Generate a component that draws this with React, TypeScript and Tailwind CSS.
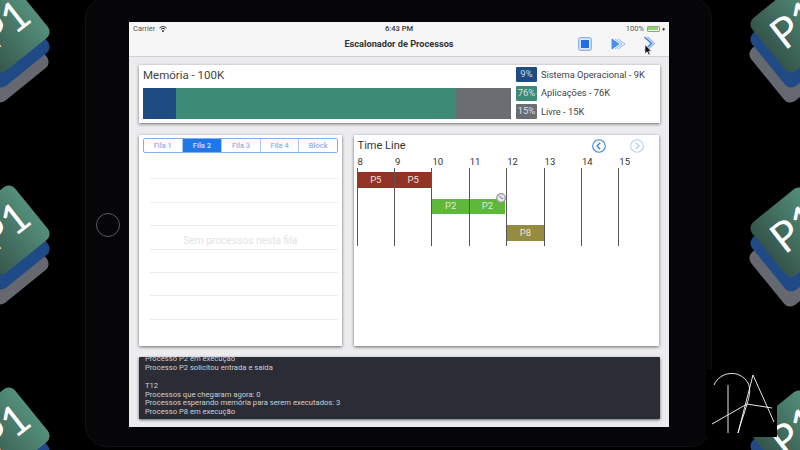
import { useId } from "react";

function Stack({ cx, cy }: { cx: number; cy: number }) {
  const id = useId();
  return (
    <svg className="absolute" style={{ left: cx - 70, top: cy - 70 }} width="140" height="160" viewBox="-70 -70 140 160">
      <defs>
        <linearGradient id={id} gradientUnits="userSpaceOnUse" x1="0" y1="-46" x2="0" y2="46">
          <stop offset="0" stopColor="#5a9a85" />
          <stop offset="1" stopColor="#2f4a42" />
        </linearGradient>
      </defs>
      <rect x="-34" y="-34" width="68" height="68" rx="8" fill="#666870" transform="translate(-1 30) rotate(51)" />
      <rect x="-34" y="-34" width="68" height="68" rx="8" fill="#1f4a86" transform="translate(0 15) rotate(51)" />
      <rect x="-34" y="-34" width="68" height="68" rx="8" fill={`url(#${id})`} transform="rotate(51)" />
      <text
        transform="translate(0 -4) rotate(-38) translate(0 15)"
        textAnchor="middle"
        fill="white"
        fontFamily="Lato, sans-serif"
        fontWeight="400"
        fontSize="42"
      >
        P1
      </text>
    </svg>
  );
}

function Swatch({ pct, label, color }: { pct: string; label: string; color: string }) {
  return (
    <div className="flex items-center gap-1 h-[15px]">
      <div className={`w-[21px] h-[15px] rounded-[1px] flex items-center justify-center text-[9.5px] text-[#d8dde0] ${color}`}>{pct}</div>
      <span className="text-[9.3px] whitespace-nowrap text-[#444]">{label}</span>
    </div>
  );
}

const tabs = ["Fila 1", "Fila 2", "Fila 3", "Fila 4", "Block"];
const tabWidths = ["w-[38px]", "w-[40px]", "w-[39px]", "w-[39px]", "w-[39px]"];
const hours = [8, 9, 10, 11, 12, 13, 14, 15];

function Bar({ label, className }: { label: string; className: string }) {
  return <div className={`z-10 flex items-center justify-center text-[9.5px] text-[#e8e4dc] ${className}`}>{label}</div>;
}

export default function App() {
  return (
    <div className="relative w-[800px] h-[450px] bg-black overflow-hidden font-['Roboto',sans-serif]">
      <div className="ml-[85px] -mt-[3px] w-[627px] h-[450px] rounded-[22px] bg-[#060508] border border-[#121114] pl-[43px] pt-[24px] flex">
        <div className="w-[540px] h-[405px] bg-[#ececee] flex flex-col">
          {/* status + nav */}
          <div className="h-[35px] bg-[#f6f6f7] border-b border-[#cfcfd2] flex flex-col">
            <div className="h-[13px] px-1 flex items-center justify-between text-[7.5px] text-[#555]">
              <div className="w-[90px] flex items-center gap-1">
                Carrier
                <svg width="8" height="6" viewBox="0 0 8 6" fill="none" stroke="#333" strokeWidth="1">
                  <path d="M.5 2a5 5 0 0 1 7 0M1.8 3.3a3.2 3.2 0 0 1 4.4 0" />
                  <circle cx="4" cy="5" r=".6" fill="#333" />
                </svg>
              </div>
              <span className="font-medium text-[#333]">6:43 PM</span>
              <div className="w-[90px] flex items-center justify-end gap-[2px]">
                100%
                <div className="w-[13px] h-[6px] border border-[#999] rounded-[1px] p-[0.5px] ml-[1px]">
                  <div className="w-full h-full bg-[#86d95e]" />
                </div>
                <span className="text-[6px] text-[#333]">♦</span>
              </div>
            </div>
            <div className="relative flex-1 flex items-center justify-center text-[9.2px] font-bold text-[#333] pb-[3px]">
              Escalonador de Processos
              <div className="absolute left-[449px] top-[1px] flex items-center">
                <svg width="14" height="14" viewBox="0 0 14 14">
                  <rect x=".7" y=".7" width="12.6" height="12.6" rx="1.5" fill="#dce9fb" stroke="#6ea4ee" strokeWidth="1" />
                  <rect x="3" y="3" width="8" height="8" fill="#1f6fe0" />
                </svg>
                <svg className="ml-[19px]" width="15" height="12" viewBox="0 0 15 12" fill="none">
                  <path d="M1 1v10l7-5z" fill="#4d90ea" stroke="#4d90ea" />
                  <path d="M4 1l7 5-7 5M7 1l7 5-7 5" stroke="#8db8f2" strokeWidth="1" />
                </svg>
                <svg className="ml-[17px]" width="12" height="15" viewBox="0 0 12 15" fill="none">
                  <path d="M1.5 1l7 6.500-7 6.500" stroke="#3f84e6" strokeWidth="1.6" />
                  <path d="M4.5 1l7 6.500-7 6.500" stroke="#8db8f2" strokeWidth="1.2" />
                </svg>
              </div>
              {/* cursor */}
              <svg className="absolute left-[515px] top-[9px]" width="8" height="12" viewBox="0 0 8 12">
                <path d="M1 .8v9l2.200-2 1.500 3.200 1.500-.7L4.700 7.200h2.800z" fill="#111" stroke="white" strokeWidth=".6" />
              </svg>
            </div>
          </div>

          <div className="flex-1 px-[10px] pt-[8px] flex flex-col">
            {/* memory */}
            <div className="w-[521px] h-[58px] bg-white shadow-[0_1px_3px_rgba(0,0,0,0.55)] px-[4px] flex justify-between">
              <div className="w-[368px] flex flex-col">
                <div className="h-[23px] flex items-end pb-[5px] text-[11.5px] leading-4 text-[#444]">Memória - 100K</div>
                <div className="h-[31px] flex">
                  <div className="w-[33px] bg-[#1d4b82]" />
                  <div className="w-[280px] bg-[#3d8a76]" />
                  <div className="w-[55px] bg-[#6c6d73]" />
                </div>
              </div>
              <div className="w-[140px] pt-[2px] flex flex-col gap-[3.5px]">
                <Swatch pct="9%" label="Sistema Operacional - 9K" color="bg-[#1d4b82]" />
                <Swatch pct="76%" label="Aplicações - 76K" color="bg-[#3d8a76]" />
                <Swatch pct="15%" label="Livre - 15K" color="bg-[#6c6d73]" />
              </div>
            </div>

            <div className="mt-[12px] flex gap-[12px]">
              {/* queue */}
              <div className="relative w-[203px] h-[211px] bg-white shadow-[0_1px_3px_rgba(0,0,0,0.55)] pt-[3px] pl-[4px]">
                <div className="w-[195px] h-[15px] flex border border-[#7fb0ef] rounded-[2px] overflow-hidden">
                  {tabs.map((t, i) => (
                    <div
                      key={t}
                      className={`${tabWidths[i]} flex items-center justify-center text-[7.5px] font-medium ${i > 0 ? "border-l border-[#a9c9f3]" : ""} ${
                        t === "Fila 2" ? "bg-[#1f78e8] text-[#cfe2fb]" : "text-[#8db3e8]"
                      }`}
                    >
                      {t}
                    </div>
                  ))}
                </div>
                <div className="ml-[7px] mt-[3px] w-[188px] flex flex-col">
                  {[0, 1, 2, 3, 4, 5, 6].map((n) => (
                    <div key={n} className="h-[23.4px] border-b border-[#ececee]" />
                  ))}
                </div>
                <div className="absolute left-0 right-0 top-[100px] text-center text-[10.2px] leading-3 text-[#e2e2e4]">Sem processos nesta fila</div>
              </div>

              {/* timeline */}
              <div className="relative w-[306px] h-[211px] bg-white shadow-[0_1px_3px_rgba(0,0,0,0.55)] pl-[3px]">
                <div className="h-[20px] pl-[1px] pt-[2px] flex items-center text-[11px] text-[#333]">Time Line</div>
                <div className="absolute left-[238px] top-[4px] flex gap-[24px]">
                  <svg width="14" height="14" viewBox="0 0 14 14" fill="none" stroke="#3f7fd8" strokeWidth="1.1">
                    <circle cx="7" cy="7" r="6.3" />
                    <path d="M8.200 3.800L5 7l3.200 3.200" strokeWidth="1.300" />
                  </svg>
                  <svg width="14" height="14" viewBox="0 0 14 14" fill="none" stroke="#b5d0f3" strokeWidth="1.1">
                    <circle cx="7" cy="7" r="6.300" />
                    <path d="M5.800 3.800L9 7l-3.200 3.200" strokeWidth="1.300" />
                  </svg>
                </div>
                <div className="relative grid grid-cols-[repeat(8,37.4px)] grid-rows-[13px_4px_16px_11px_15px_11px_16px_5px]">
                  {hours.map((h, i) => (
                    <div key={h} className="row-start-1 pl-[1px] pt-[1px] text-[9.5px] leading-3 text-[#333]" style={{ gridColumnStart: i + 1 }}>
                      {h}
                    </div>
                  ))}
                  {hours.map((h, i) => (
                    <div key={h} className="row-start-2 row-end-9 border-l border-[#555]" style={{ gridColumnStart: i + 1 }} />
                  ))}
                  <Bar label="P5" className="row-start-3 col-start-1 bg-[#933326] ml-[1px]" />
                  <Bar label="P5" className="row-start-3 col-start-2 bg-[#933326] ml-[1px]" />
                  <Bar label="P2" className="row-start-5 col-start-3 bg-[#5eb93a] ml-[1px]" />
                  <Bar label="P2" className="row-start-5 col-start-4 bg-[#5eb93a] ml-[1px] mr-[1px]" />
                  <Bar label="P8" className="row-start-7 col-start-5 bg-[#958c3f] ml-[1px]" />
                  {/* relógio sobre a barra */}
                  <svg className="absolute left-[139px] top-[38px] z-20" width="10" height="10" viewBox="0 0 10 10">
                    <circle cx="5" cy="5" r="4.300" fill="#dfe6ea" stroke="#9a9a9a" strokeWidth="1.200" />
                    <path d="M5 5L3.500 2.800M5 5l2 .8" stroke="#5f86b0" strokeWidth="1" />
                  </svg>
                </div>
              </div>
            </div>

            {/* log */}
            <div className="mt-[11px] w-[521px] h-[62px] bg-[#2a2d36] shadow-[0_1px_3px_rgba(0,0,0,0.6)] rounded-[1px] overflow-hidden pl-[6px] pb-[2px] flex flex-col justify-end text-[7.65px] leading-[8.8px] text-[#cfcfd2]">
              <div className="shrink-0">
                <div>Processo P2 em execução</div>
                <div>Processo P2 solicitou entrada e saída</div>
                <div className="h-[8.8px]" />
                <div>T12</div>
                <div>Processos que chegaram agora: 0</div>
                <div>Processos esperando memória para serem executados: 3</div>
                <div>Processo P8 em execução</div>
              </div>
            </div>
          </div>
        </div>
      </div>

      {/* botão home */}
      <div className="absolute left-[96px] top-[213px] w-[24px] h-[24px] rounded-full border border-[#5a5a5e]" />

      {/* logos de fundo */}
      <Stack cx={5} cy={28} />
      <Stack cx={5} cy={230} />
      <Stack cx={5} cy={432} />
      <Stack cx={795} cy={28} />
      <Stack cx={795} cy={232} />
      <Stack cx={795} cy={435} />

      {/* marca PA */}
      <div className="absolute left-[706px] top-[369px] w-[71px] h-[68px] bg-black">
        <svg width="71" height="68" viewBox="0 0 71 68" fill="none" stroke="white" strokeWidth="0.9">
          <path d="M8 16C14 2 34 0 42 14c5 10-2 22-10 50" />
          <path d="M22 16v48" />
          <path d="M6 55l35-20 25 4" />
          <path d="M47 6L32 64M47 6l21 47" />
        </svg>
      </div>
    </div>
  );
}
